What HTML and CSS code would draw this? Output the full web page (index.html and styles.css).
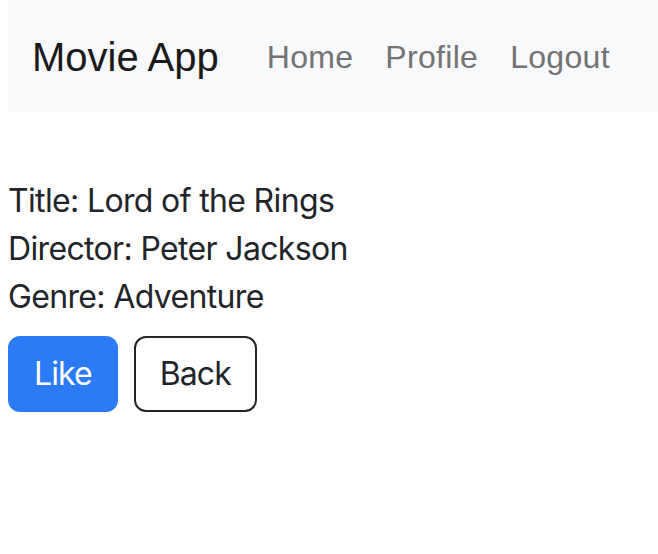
FILE: index.html
```html
<!DOCTYPE html>
<html>
<head>
<meta charset="utf-8">
<link rel="stylesheet" href="styles.css">
</head>
<body>
<nav class="navbar">
  <a class="brand" href="#">Movie App</a>
  <ul class="nav-links">
    <li><a href="#">Home</a></li>
    <li><a href="#">Profile</a></li>
    <li><a href="#">Logout</a></li>
  </ul>
</nav>
<main class="movie">
  <p class="line">Title: Lord of the Rings</p>
  <p class="line">Director: Peter Jackson</p>
  <p class="line">Genre: Adventure</p>
  <div class="actions">
    <button class="btn btn-primary">Like</button>
    <button class="btn btn-outline">Back</button>
  </div>
</main>
</body>
</html>
```
FILE: styles.css
```css
html, body {
  margin: 0;
  padding: 0;
}
body {
  margin: 0 0 0 8px;
  font-family: Inter, "Liberation Sans", sans-serif;
  font-size: 32px;
  line-height: 48px;
  letter-spacing: -0.65px;
  color: #212529;
  background: #fff;
}
.navbar {
  display: flex;
  align-items: center;
  height: 112px;
  box-sizing: border-box;
  padding: 2px 24px 0;
  background: #f8f9fa;
  letter-spacing: 0;
}
.brand {
  font-family: "Liberation Sans", sans-serif;
  font-size: 40px;
  color: #1a1a1a;
  text-decoration: none;
  margin-right: 32px;
}
.nav-links {
  display: flex;
  list-style: none;
  margin: 0;
  padding: 0;
}
.nav-links a {
  display: block;
  padding: 0 16px;
  font-family: "Liberation Sans", sans-serif;
  font-size: 32px;
  letter-spacing: 0.3px;
  color: #737373;
  text-decoration: none;
}
.movie {
  padding-top: 65px;
}
.line {
  margin: 0;
}
.actions {
  display: flex;
  gap: 16px;
  margin-top: 15px;
}
.btn {
  font-family: Inter, "Liberation Sans", sans-serif;
  font-size: 32px;
  line-height: 48px;
  letter-spacing: -0.9px;
  padding: 12px 24px;
  border: 2px solid transparent;
  border-radius: 12px;
  background: #fff;
  color: #212529;
}
.btn-primary {
  background: #2b7bf6;
  border-color: #2b7bf6;
  color: #fff;
}
.btn-outline {
  border-color: #212529;
}
```
